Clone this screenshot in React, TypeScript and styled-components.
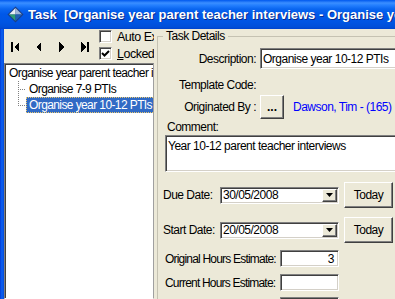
import React from 'react';
import styled, {createGlobalStyle} from 'styled-components';

const GlobalStyle = createGlobalStyle`
	html, body {
		margin: 0;
		padding: 0;
		background: #ece9d8;
	}
	body {
		font-family: "Liberation Sans", Arial, sans-serif;
		font-size: 12px;
		letter-spacing: -0.5px;
		color: #000;
	}
	* {
		box-sizing: border-box;
	}
`;

const Window = styled.div`
	width: 395px;
	height: 299px;
	overflow: hidden;
	display: flex;
	flex-direction: column;
	background: #ece9d8;
`;

const TitleBar = styled.div`
	flex: none;
	height: 29px;
	display: flex;
	align-items: center;
	gap: 4px;
	padding-left: 7px;
	background: linear-gradient(180deg, #0058ee 0, #3b8fff 3px, #2681ff 5px, #0a66f0 9px, #0058e9 14px, #0055e3 22px, #004fd9 27px, #0044cc 29px);
`;

const IconSlot = styled.span`
	flex: none;
	display: flex;
	width: 17px;
	height: 17px;
`;

const Title = styled.div`
	min-width: 0;
	overflow: hidden;
	font-family: "Liberation Sans", Arial, sans-serif;
	font-weight: bold;
	font-size: 13px;
	letter-spacing: 0;
	color: #fff;
	white-space: nowrap;
	text-shadow: 1px 1px 0 #0a2a8a;
`;

const Frame = styled.div`
	flex: 1;
	min-height: 0;
	display: flex;
`;

const SideBorder = styled.div`
	flex: none;
	width: 4px;
	background: linear-gradient(90deg, #0030c8 0, #0858f0 1px, #0a5ce8 3px, #0041d6 4px);
`;

const LeftPane = styled.div`
	flex: none;
	width: 150px;
	display: flex;
	flex-direction: column;
	overflow: hidden;
`;

const Toolbar = styled.div`
	flex: none;
	height: 34px;
	display: flex;
	align-items: center;
	white-space: nowrap;
`;

const NavButton = styled.div`
	flex: none;
	width: 23px;
	height: 24px;
	display: flex;
	align-items: center;
	justify-content: center;
	margin-top: 1px;
`;

const CheckList = styled.div`
	display: flex;
	flex-direction: column;
	gap: 4px;
	margin-left: 3px;
	padding-bottom: 2px;
`;

const CheckRow = styled.label`
	display: flex;
	align-items: center;
	gap: 5px;
	height: 13px;
	font-size: 12.5px;
`;

const Box = styled.span`
	flex: none;
	width: 13px;
	height: 13px;
	background: #fff;
	border: 1px solid;
	border-color: #808080 #fff #fff #808080;
	box-shadow: inset 1px 1px 0 #404040, inset -1px -1px 0 #d4d0c8;
	display: flex;
	align-items: center;
	justify-content: center;
`;

const Underline = styled.span`
	text-decoration: underline;
`;

const Tree = styled.div`
	flex: 1;
	background: #fff;
	border: 1px solid;
	border-color: #808080 #a0a0a0 #fff #808080;
	box-shadow: inset 1px 1px 0 #404040;
	padding: 1px 0 0 1px;
	overflow: hidden;
	white-space: nowrap;
	letter-spacing: -0.6px;
`;

const TreeRow = styled.div<{$indent: number}>`
	height: 16px;
	display: flex;
	align-items: stretch;
	padding-left: ${p => p.$indent}px;
`;

const Connector = styled.span<{$last?: boolean}>`
	flex: none;
	width: 8px;
	background:
		repeating-linear-gradient(to right, #808080 0 1px, transparent 1px 2px) 0 8px / 100% 1px no-repeat,
		repeating-linear-gradient(to bottom, #808080 0 1px, transparent 1px 2px) 0 0 / 1px ${p => (p.$last ? '9px' : '100%')} no-repeat;
`;

const NodeLabel = styled.span<{$selected?: boolean}>`
	display: flex;
	align-items: center;
	padding: 0 2px;
	border: 1px dotted ${p => (p.$selected ? '#e8c870' : 'transparent')};
	background: ${p => (p.$selected ? '#316ac5' : 'transparent')};
	color: ${p => (p.$selected ? '#fff' : '#000')};
`;

const RightPane = styled.div`
	flex: 1;
	min-width: 0;
	overflow: hidden;
	padding-left: 3px;
`;

const GroupBox = styled.fieldset`
	width: 300px;
	height: 400px;
	margin: 0;
	padding: 0;
	border: 1px solid #c5c2b2;
	display: flex;
	flex-direction: column;
`;

const Legend = styled.legend`
	margin-left: 5px;
	padding: 0 3px;
	line-height: 15px;
`;

const FieldRow = styled.div<{$h: number; $top: number}>`
	display: flex;
	align-items: center;
	gap: 4px;
	height: ${p => p.$h}px;
	margin-top: ${p => p.$top}px;
	white-space: nowrap;
`;

const FieldLabel = styled.span`
	flex: none;
	width: 98px;
	text-align: right;
`;

const TextBox = styled.div<{$w?: number; $h: number; $right?: boolean}>`
	flex: ${p => (p.$w ? 'none' : '1')};
	width: ${p => (p.$w ? `${p.$w}px` : 'auto')};
	height: ${p => p.$h}px;
	display: flex;
	align-items: center;
	justify-content: ${p => (p.$right ? 'flex-end' : 'flex-start')};
	padding: 0 ${p => (p.$right ? '4px' : '2px')} 0 2px;
	background: #fff;
	border: 1px solid;
	border-color: #808080 #fff #fff #808080;
	box-shadow: inset 1px 1px 0 #404040, inset -1px -1px 0 #d4d0c8;
	white-space: nowrap;
	overflow: hidden;
`;

const RaisedButton = styled.div<{$w: number; $h: number; $bold?: boolean}>`
	flex: none;
	width: ${p => p.$w}px;
	height: ${p => p.$h}px;
	display: flex;
	align-items: center;
	justify-content: center;
	background: #ece9d8;
	border: 1px solid;
	border-color: #fff #404040 #404040 #fff;
	box-shadow: inset -1px -1px 0 #808080;
	font-weight: ${p => (p.$bold ? 'bold' : 'normal')};
	letter-spacing: ${p => (p.$bold ? '0' : '-0.5px')};
`;

const LinkText = styled.span`
	color: #0000ff;
	margin-left: 5px;
`;

const CommentLabel = styled.div`
	height: 15px;
	line-height: 15px;
	margin-top: 1px;
	padding-left: 9px;
`;

const CommentBox = styled.div`
	height: 37px;
	margin-left: 7px;
	padding: 3px 2px;
	background: #fff;
	border: 1px solid;
	border-color: #808080 #fff #fff #808080;
	box-shadow: inset 1px 1px 0 #404040, inset -1px -1px 0 #d4d0c8;
	white-space: nowrap;
`;

const DateRow = styled.div<{$top: number}>`
	display: flex;
	align-items: center;
	height: 26px;
	margin-top: ${p => p.$top}px;
	padding-left: 5px;
	white-space: nowrap;
`;

const DateLabel = styled.span`
	flex: none;
	width: 57px;
`;

const Combo = styled.div`
	flex: none;
	width: 119px;
	height: 17px;
	display: flex;
	align-items: center;
	justify-content: space-between;
	padding: 0 1px 0 2px;
	margin-right: 5px;
	background: #fff;
	border: 1px solid;
	border-color: #808080 #fff #fff #808080;
	box-shadow: inset 1px 1px 0 #404040, inset -1px -1px 0 #d4d0c8;
`;

const DropButton = styled.span`
	flex: none;
	width: 15px;
	height: 13px;
	display: flex;
	align-items: center;
	justify-content: center;
	background: #ece9d8;
	border: 1px solid;
	border-color: #fff #404040 #404040 #fff;
	box-shadow: inset -1px -1px 0 #808080;
`;

const HoursRow = styled.div<{$top: number}>`
	display: flex;
	align-items: center;
	height: 17px;
	margin-top: ${p => p.$top}px;
	padding-left: 7px;
	white-space: nowrap;
`;

const HoursLabel = styled.span`
	flex: none;
	width: 115px;
	letter-spacing: -0.8px;
`;

const AppIcon = () => (
	<svg width="17" height="17" viewBox="0 0 17 17">
		<polygon points="8.5,0.5 16.5,8.5 8.5,16.5 0.5,8.5" fill="#1b3f86"/>
		<polygon points="8.5,2 8.5,8.5 2,8.5" fill="#e8eef6"/>
		<polygon points="8.5,2 15,8.5 8.5,8.5" fill="#9fb6d8"/>
		<polygon points="2,8.5 8.5,8.5 8.5,15" fill="#2e9c74"/>
		<polygon points="15,8.5 8.5,8.5 8.5,15" fill="#1f5fb5"/>
	</svg>
);

const NavIcon = ({kind}: {kind: 'first' | 'prev' | 'next' | 'last'}) => (
	<svg width="9" height="10" viewBox="0 0 9 10" shapeRendering="crispEdges">
		{kind === 'first' && <><rect x="0" y="0" width="2" height="10"/><polygon points="8,0 3,5 8,10"/></>}
		{kind === 'prev' && <polygon points="7,0 2,5 7,10"/>}
		{kind === 'next' && <polygon points="2,0 7,5 2,10"/>}
		{kind === 'last' && <><polygon points="1,0 6,5 1,10"/><rect x="7" y="0" width="2" height="10"/></>}
	</svg>
);

const Arrow = () => (
	<svg width="7" height="4" viewBox="0 0 7 4">
		<polygon points="0,0 7,0 3.5,4"/>
	</svg>
);

const Check = () => (
	<svg width="9" height="9" viewBox="0 0 9 9">
		<polyline points="1,4 3.5,6.5 8,2" fill="none" stroke="#000" strokeWidth="2"/>
	</svg>
);

export default function App() {
	return (
		<>
			<GlobalStyle/>
			<Window>
				<TitleBar>
					<IconSlot><AppIcon/></IconSlot>
					<Title>Task&nbsp; [Organise year parent teacher interviews - Organise year 10-12 PTIs]</Title>
				</TitleBar>
				<Frame>
					<SideBorder/>
					<LeftPane>
						<Toolbar>
							<NavButton><NavIcon kind="first"/></NavButton>
							<NavButton><NavIcon kind="prev"/></NavButton>
							<NavButton><NavIcon kind="next"/></NavButton>
							<NavButton><NavIcon kind="last"/></NavButton>
							<CheckList>
								<CheckRow><Box/>Auto Expand</CheckRow>
								<CheckRow><Box><Check/></Box><span><Underline>L</Underline>ocked</span></CheckRow>
							</CheckList>
						</Toolbar>
						<Tree>
							<TreeRow $indent={0}>
								<NodeLabel>Organise year parent teacher interviews</NodeLabel>
							</TreeRow>
							<TreeRow $indent={12}>
								<Connector/>
								<NodeLabel>Organise 7-9 PTIs</NodeLabel>
							</TreeRow>
							<TreeRow $indent={12}>
								<Connector $last/>
								<NodeLabel $selected>Organise year 10-12 PTIs</NodeLabel>
							</TreeRow>
						</Tree>
					</LeftPane>
					<RightPane>
						<GroupBox>
							<Legend>Task Details</Legend>
							<FieldRow $h={21} $top={4}>
								<FieldLabel>Description:</FieldLabel>
								<TextBox $h={21}>Organise year 10-12 PTIs</TextBox>
							</FieldRow>
							<FieldRow $h={19} $top={6}>
								<FieldLabel>Template Code:</FieldLabel>
							</FieldRow>
							<FieldRow $h={24} $top={1}>
								<FieldLabel>Originated By :</FieldLabel>
								<RaisedButton $w={24} $h={24} $bold>...</RaisedButton>
								<LinkText>Dawson, Tim - (165)</LinkText>
							</FieldRow>
							<CommentLabel>Comment:</CommentLabel>
							<CommentBox>Year 10-12 parent teacher interviews</CommentBox>
							<DateRow $top={10}>
								<DateLabel>Due Date:</DateLabel>
								<Combo>30/05/2008<DropButton><Arrow/></DropButton></Combo>
								<RaisedButton $w={49} $h={26}>Today</RaisedButton>
							</DateRow>
							<DateRow $top={9}>
								<DateLabel>Start Date:</DateLabel>
								<Combo>20/05/2008<DropButton><Arrow/></DropButton></Combo>
								<RaisedButton $w={49} $h={26}>Today</RaisedButton>
							</DateRow>
							<HoursRow $top={7}>
								<HoursLabel>Original Hours Estimate:</HoursLabel>
								<TextBox $w={59} $h={17} $right>3</TextBox>
							</HoursRow>
							<HoursRow $top={7}>
								<HoursLabel>Current Hours Estimate:</HoursLabel>
								<TextBox $w={59} $h={17}/>
							</HoursRow>
							<HoursRow $top={6}>
								<HoursLabel>Actual Hours:</HoursLabel>
								<TextBox $w={59} $h={17}/>
							</HoursRow>
						</GroupBox>
					</RightPane>
				</Frame>
			</Window>
		</>
	);
}
